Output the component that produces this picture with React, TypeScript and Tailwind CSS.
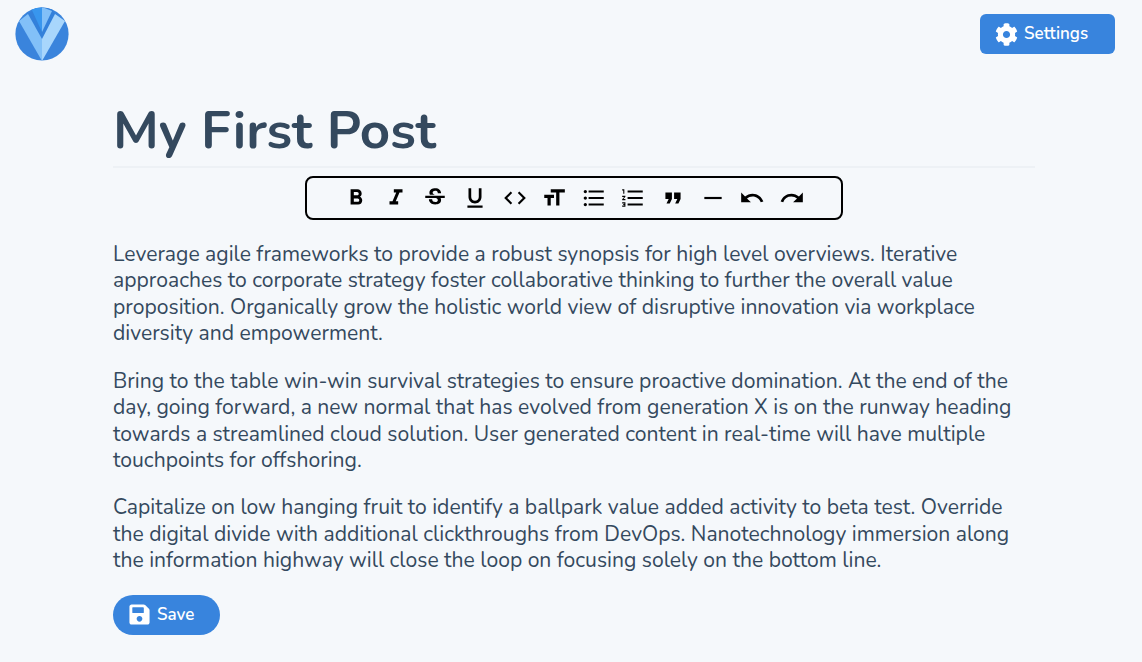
import { FaCog, FaSave } from "react-icons/fa";
import {
  MdFormatBold,
  MdFormatItalic,
  MdStrikethroughS,
  MdFormatUnderlined,
  MdCode,
  MdFormatSize,
  MdFormatListBulleted,
  MdFormatListNumbered,
  MdFormatQuote,
  MdHorizontalRule,
  MdUndo,
  MdRedo,
} from "react-icons/md";

const tools = [
  MdFormatBold,
  MdFormatItalic,
  MdStrikethroughS,
  MdFormatUnderlined,
  MdCode,
  MdFormatSize,
  MdFormatListBulleted,
  MdFormatListNumbered,
  MdFormatQuote,
  MdHorizontalRule,
  MdUndo,
  MdRedo,
];

const paragraphs = [
  "Leverage agile frameworks to provide a robust synopsis for high level overviews. Iterative approaches to corporate strategy foster collaborative thinking to further the overall value proposition. Organically grow the holistic world view of disruptive innovation via workplace diversity and empowerment.",
  "Bring to the table win-win survival strategies to ensure proactive domination. At the end of the day, going forward, a new normal that has evolved from generation X is on the runway heading towards a streamlined cloud solution. User generated content in real-time will have multiple touchpoints for offshoring.",
  "Capitalize on low hanging fruit to identify a ballpark value added activity to beta test. Override the digital divide with additional clickthroughs from DevOps. Nanotechnology immersion along the information highway will close the loop on focusing solely on the bottom line.",
];

function Logo() {
  return (
    <svg viewBox="0 0 54 54" className="w-[54px] h-[54px]">
      <defs>
        <clipPath id="logo-circle">
          <circle cx="27" cy="27" r="26.6" />
        </clipPath>
      </defs>
      <g clipPath="url(#logo-circle)">
        <rect width="54" height="54" fill="#3a84dc" />
        <polygon points="13,7 22,0 36,0 40,7 27,32" fill="#3380da" />
        <polygon points="16,1 27,0 27,25" fill="#3896ee" />
        <polygon points="27,0 37,4 27,25" fill="#82c0f8" />
        <polygon points="4,14 13,7 27,32 27,54" fill="#82c0f8" />
        <polygon points="27,32 40,7 50,14 27,54" fill="#a8d6fc" />
      </g>
    </svg>
  );
}

export default function App() {
  return (
    <div className="min-h-[662px] bg-[#f5f8fb] text-[#34495e] font-['Nunito','Noto_Sans',sans-serif]">
      <header className="flex items-start justify-between pl-[15px] pr-[27px] pt-[7px] h-[70px]">
        <Logo />
        <button className="mt-[7px] flex items-center gap-[6px] w-[135px] h-10 pl-[15px] rounded-md bg-[#3884dd] text-white font-semibold text-[17px]">
          <FaCog className="w-[23px] h-[23px]" />
          Settings
        </button>
      </header>

      <main className="w-[922px] ml-[113px]">
        <h1 className="h-[98px] border-b-2 border-[#edf1f5] text-[52.8px] leading-[122px] font-bold">
          My First Post
        </h1>

        <div className="mt-[8px] mx-auto w-[538px] h-[44px] flex items-center justify-center gap-[13.64px] border-2 border-black rounded-lg text-black">
          {tools.map((Icon, i) => (
            <Icon key={i} className="w-[26px] h-[26px]" />
          ))}
        </div>

        <div className="mt-[21px] text-[21.12px] leading-[26.4px]">
          {paragraphs.map((text, i) => (
            <p key={i} className="mb-[21.12px]">
              {text}
            </p>
          ))}
        </div>

        <button className="flex items-center gap-[6px] w-[107px] h-10 pl-[15px] rounded-full bg-[#3884dd] text-white font-semibold text-[17px]">
          <FaSave className="w-[23px] h-[23px]" />
          Save
        </button>
      </main>
    </div>
  );
}
